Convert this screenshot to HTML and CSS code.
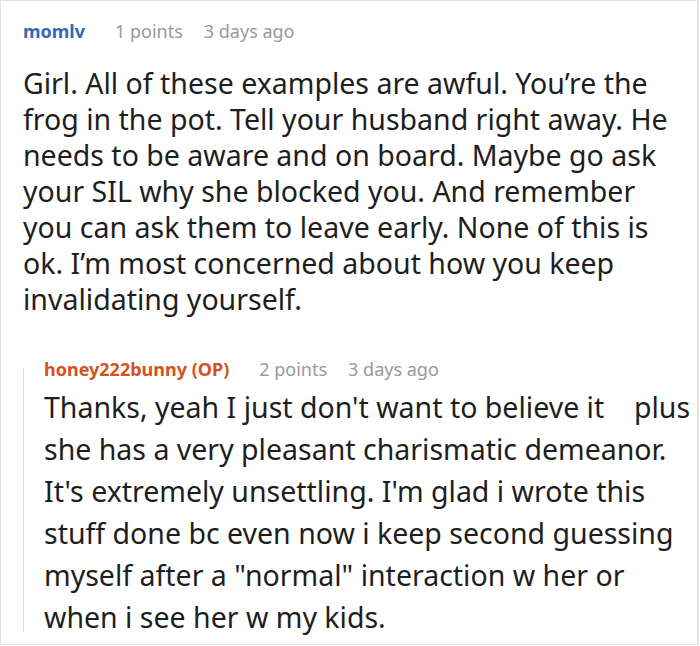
FILE: index.html
```html
<!DOCTYPE html>
<html>
<head>
<meta charset="utf-8">
<link rel="stylesheet" href="styles.css">
</head>
<body>
<div class="thread">
  <div class="comment">
    <div class="meta"><span class="author">momlv</span><span class="points">1 points</span><span class="time">3 days ago</span></div>
    <div class="text">Girl. All of these examples are awful. You’re the<br>frog in the pot. Tell your husband right away. He<br>needs to be aware and on board. Maybe go ask<br>your SIL why she blocked you. And remember<br>you can ask them to leave early. None of this is<br>ok. I’m most concerned about how you keep<br>invalidating yourself.</div>
    <div class="reply">
      <div class="meta"><span class="author op">honey222bunny (OP)</span><span class="points">2 points</span><span class="time">3 days ago</span></div>
      <div class="text">Thanks, yeah I just don't want to believe it &nbsp;&nbsp; plus<br>she has a very pleasant charismatic demeanor.<br>It's extremely unsettling. I'm glad i wrote this<br>stuff done bc even now i keep second guessing<br>myself after a "normal" interaction w her or<br>when i see her w my kids.</div>
    </div>
  </div>
</div>
</body>
</html>
```
FILE: styles.css
```css
html, body { margin: 0; padding: 0; background: #fff; }
body { font-family: "Noto Sans", sans-serif; }
.thread {
  width: 699px;
  height: 645px;
  box-sizing: border-box;
  border: 1px solid #e3e3e3;
  border-right-width: 2px;
  overflow: hidden;
}
.comment { padding: 15px 4px 0 22px; }
.meta { font-size: 18px; line-height: 30px; color: #999; white-space: nowrap; }
.author { font-weight: 700; color: #3368b5; margin-right: 30px; }
.author.op { color: #d4521c; }
.points { margin-right: 21px; }
.text { font-size: 28.5px; line-height: 36px; color: #1e1e1e; white-space: nowrap; }
.comment > .text { margin-top: 19px; }
.reply {
  margin-top: 37px;
  padding-left: 21px;
  background: linear-gradient(#dcdcdc, #dcdcdc) no-repeat 0 14px / 1px calc(100% - 20px);
}
.reply > .text { margin-top: 2px; font-size: 28.5px; line-height: 42px; }
```
